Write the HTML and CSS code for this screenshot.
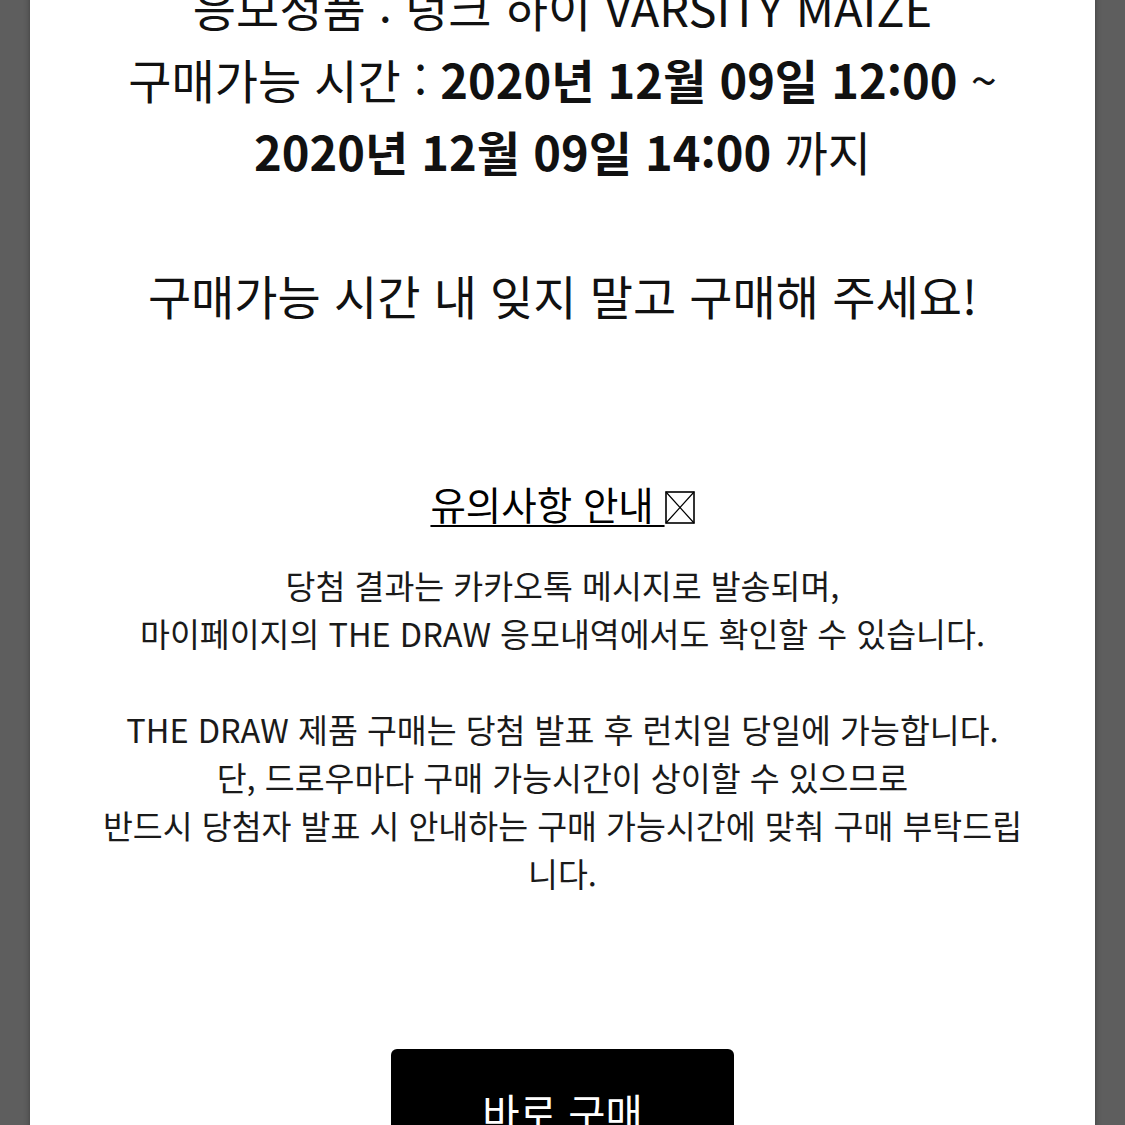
FILE: index.html
```html
<!DOCTYPE html>
<html lang="ko">
<head>
    <meta charset="UTF-8">
    <meta name="viewport" content="width=device-width, initial-scale=1.0">
    <title>THE DRAW 당첨 안내</title>
    <link rel="stylesheet" href="styles.css">
</head>
<body>
    <div class="modal">
        <p class="info">
            응모정품 : 덩크 하이 VARSITY MAIZE<br>
            구매가능 시간 : <b>2020년 12월 09일 12:00</b> ~<br>
            <b>2020년 12월 09일 14:00</b> 까지<br>
            <br>
            구매가능 시간 내 잊지 말고 구매해 주세요!
        </p>

        <h3 class="notice-title"><u>유의사항 안내 </u><svg class="tofu" width="30" height="33" viewBox="0 0 30 33"><rect x="1" y="1" width="28" height="31" fill="none" stroke="#000" stroke-width="1.6"/><path d="M1 1L29 32M29 1L1 32" stroke="#000" stroke-width="1.2"/></svg></h3>

        <p class="notice">
            당첨 결과는 카카오톡 메시지로 발송되며,<br>
            마이페이지의 THE DRAW 응모내역에서도 확인할 수 있습니다.<br>
            <br>
            THE DRAW 제품 구매는 당첨 발표 후 런치일 당일에 가능합니다.<br>
            단, 드로우마다 구매 가능시간이 상이할 수 있으므로<br>
            반드시 당첨자 발표 시 안내하는 구매 가능시간에 맞춰 구매 부탁드립니다.
        </p>

        <button class="btn">바로 구매</button>
    </div>
</body>
</html>
```

FILE: styles.css
```css
html, body {
    height: 100%;
}

body {
    margin: 0;
    background-color: #5e5e5e;
    overflow: hidden;
    font-family: "Noto Sans CJK KR", "Noto Sans", sans-serif;
    color: #111;
}

.modal {
    margin: 0 30px;
    min-height: 100%;
    padding-bottom: 40px;
    background-color: #fff;
    box-shadow: 0 0 6px rgba(0, 0, 0, 0.35);
    text-align: center;
}

.info {
    margin: -29px 0 0;
    font-size: 47px;
    line-height: 72px;
}

.info b {
    font-weight: bold;
}

.notice-title {
    margin: 142px 0 0;
    height: 60px;
    font-size: 38.5px;
    font-weight: normal;
    line-height: 60px;
    color: #000;
}

.notice-title u {
    text-decoration-thickness: 2px;
    text-underline-offset: 5px;
}

.tofu {
    vertical-align: -4px;
}

.notice {
    width: 935px;
    margin: 28px auto 0;
    font-size: 32.5px;
    line-height: 48px;
    color: #1a1a1a;
}

.btn {
    display: block;
    width: 343px;
    margin: 152px auto 0;
    padding: 38px 0 40px;
    border: none;
    border-radius: 6px 6px 0 0;
    background-color: #000;
    color: #fff;
    font-family: inherit;
    font-size: 40.5px;
    line-height: 50px;
    text-align: center;
    cursor: pointer;
}
```
